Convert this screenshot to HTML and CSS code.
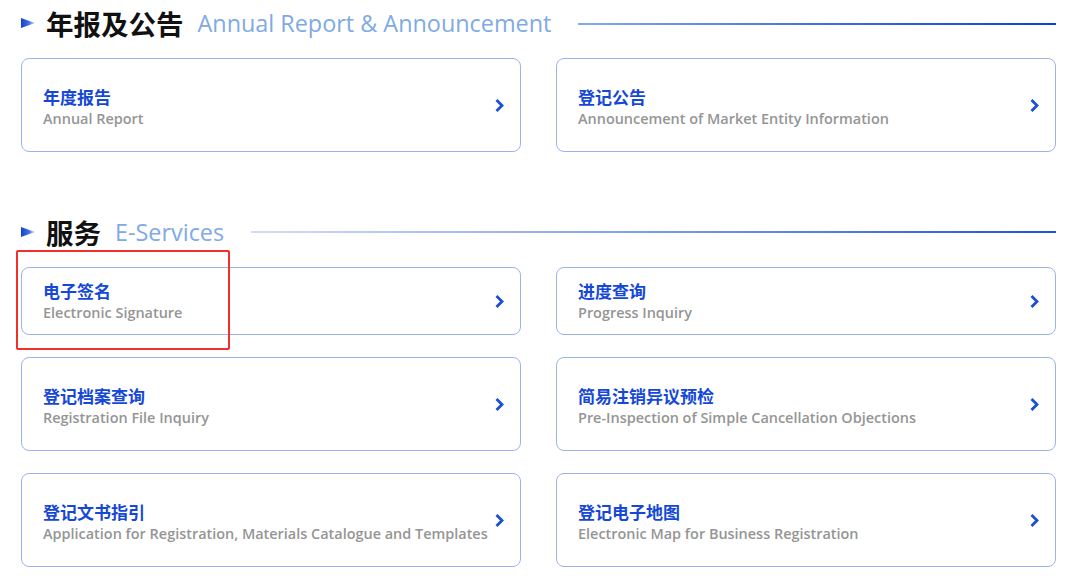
FILE: index.html
```html
<!DOCTYPE html>
<html lang="zh">
<head>
<meta charset="utf-8">
<title>年报及公告</title>
<link rel="stylesheet" href="styles.css">
</head>
<body>
<div class="page">
  <section class="section first">
    <div class="head">
      <svg class="tri" width="16" height="12" viewBox="0 0 16 12"><defs><linearGradient id="g1" x1="0" x2="1" y1="0" y2="0"><stop offset="0" stop-color="#1542cf"/><stop offset="0.55" stop-color="#3f6fe0"/><stop offset="1" stop-color="#c7d6f6"/></linearGradient></defs><polygon points="1,1 15,6 1,11" fill="url(#g1)"/></svg>
      <h2 class="h-cn">年报及公告</h2>
      <span class="h-en">Annual Report &amp; Announcement</span>
      <span class="h-line line1"></span>
    </div>
    <div class="grid">
      <a class="card tall"><div class="txt"><div class="t">年度报告</div><div class="s">Annual Report</div></div><svg class="chev" width="11" height="15" viewBox="0 0 11 15"><path d="M2.5 2 L8 7.5 L2.5 13" fill="none" stroke="#1a4fd8" stroke-width="2.8"/></svg></a>
      <a class="card tall"><div class="txt"><div class="t">登记公告</div><div class="s">Announcement of Market Entity Information</div></div><svg class="chev" width="11" height="15" viewBox="0 0 11 15"><path d="M2.5 2 L8 7.5 L2.5 13" fill="none" stroke="#1a4fd8" stroke-width="2.8"/></svg></a>
    </div>
  </section>
  <section class="section second">
    <div class="head">
      <svg class="tri" width="16" height="12" viewBox="0 0 16 12"><defs><linearGradient id="g2" x1="0" x2="1" y1="0" y2="0"><stop offset="0" stop-color="#1542cf"/><stop offset="0.55" stop-color="#3f6fe0"/><stop offset="1" stop-color="#c7d6f6"/></linearGradient></defs><polygon points="1,1 15,6 1,11" fill="url(#g2)"/></svg>
      <h2 class="h-cn">服务</h2>
      <span class="h-en">E-Services</span>
      <span class="h-line line2"></span>
    </div>
    <div class="grid">
      <a class="card short"><div class="txt"><div class="t">电子签名</div><div class="s">Electronic Signature</div></div><svg class="chev" width="11" height="15" viewBox="0 0 11 15"><path d="M2.5 2 L8 7.5 L2.5 13" fill="none" stroke="#1a4fd8" stroke-width="2.8"/></svg></a>
      <a class="card short"><div class="txt"><div class="t">进度查询</div><div class="s">Progress Inquiry</div></div><svg class="chev" width="11" height="15" viewBox="0 0 11 15"><path d="M2.5 2 L8 7.5 L2.5 13" fill="none" stroke="#1a4fd8" stroke-width="2.8"/></svg></a>
      <a class="card tall"><div class="txt"><div class="t">登记档案查询</div><div class="s">Registration File Inquiry</div></div><svg class="chev" width="11" height="15" viewBox="0 0 11 15"><path d="M2.5 2 L8 7.5 L2.5 13" fill="none" stroke="#1a4fd8" stroke-width="2.8"/></svg></a>
      <a class="card tall"><div class="txt"><div class="t">简易注销异议预检</div><div class="s">Pre-Inspection of Simple Cancellation Objections</div></div><svg class="chev" width="11" height="15" viewBox="0 0 11 15"><path d="M2.5 2 L8 7.5 L2.5 13" fill="none" stroke="#1a4fd8" stroke-width="2.8"/></svg></a>
      <a class="card tall"><div class="txt"><div class="t">登记文书指引</div><div class="s">Application for Registration, Materials Catalogue and Templates</div></div><svg class="chev" width="11" height="15" viewBox="0 0 11 15"><path d="M2.5 2 L8 7.5 L2.5 13" fill="none" stroke="#1a4fd8" stroke-width="2.8"/></svg></a>
      <a class="card tall"><div class="txt"><div class="t">登记电子地图</div><div class="s">Electronic Map for Business Registration</div></div><svg class="chev" width="11" height="15" viewBox="0 0 11 15"><path d="M2.5 2 L8 7.5 L2.5 13" fill="none" stroke="#1a4fd8" stroke-width="2.8"/></svg></a>
    </div>
  </section>
  <div class="highlight"></div>
</div>
</body>
</html>
```
FILE: styles.css
```css
* { box-sizing: border-box; }
html, body { margin: 0; padding: 0; background: #ffffff; }
body {
  font-family: "Open Sans", "Noto Sans CJK SC", sans-serif;
  width: 1080px;
  height: 581px;
  overflow: hidden;
}
.page {
  position: relative;
  padding: 0 24px 0 21px;
}
.section.second { margin-top: 57px; }
.head {
  display: flex;
  align-items: center;
  height: 46px;
}
.tri { margin-left: -1px; margin-right: 10px; flex: none; }
.h-cn {
  margin: 0;
  font-family: "Noto Sans CJK SC", sans-serif;
  font-size: 27.5px;
  font-weight: 700;
  color: #111111;
  line-height: 46px;
}
.h-en {
  margin-left: 14px;
  font-family: "Open Sans", sans-serif;
  font-size: 23.4px;
  font-weight: 400;
  color: #80aae6;
  line-height: 46px;
  white-space: nowrap;
}
.h-line {
  flex: 1;
  height: 2px;
  margin-left: 27px;
  margin-top: 2px;
}
.line1 { background: linear-gradient(90deg, #86a8ee 0%, #3c6ae0 55%, #0b43d6 100%); }
.line2 { background: linear-gradient(90deg, #d3def8 0%, #7c9ce9 50%, #1f52d9 100%); margin-top: 0; }
.grid {
  display: grid;
  grid-template-columns: 500px 500px;
  column-gap: 35px;
  row-gap: 22px;
  margin-top: 12px;
}
.card {
  display: flex;
  align-items: center;
  justify-content: space-between;
  border: 1px solid #9bb4ee;
  border-radius: 8px;
  padding: 0 15px 0 21px;
  background: #fff;
}
.card.tall { height: 94px; padding-top: 4px; }
.card.short { height: 68px; }
.t {
  font-family: "Noto Sans CJK SC", sans-serif;
  font-size: 17px;
  font-weight: 700;
  color: #1548d6;
  line-height: 24px;
}
.s {
  font-family: "Open Sans", sans-serif;
  font-size: 14.45px;
  font-weight: 600;
  color: #959595;
  line-height: 20px;
  white-space: nowrap;
}
.chev { flex: none; }
.card.tall .chev { margin-top: -4px; }
.highlight {
  position: absolute;
  left: 16px;
  top: 250px;
  width: 214px;
  height: 100px;
  border: 2px solid #f2302a;
  border-radius: 2px;
  pointer-events: none;
}
```
